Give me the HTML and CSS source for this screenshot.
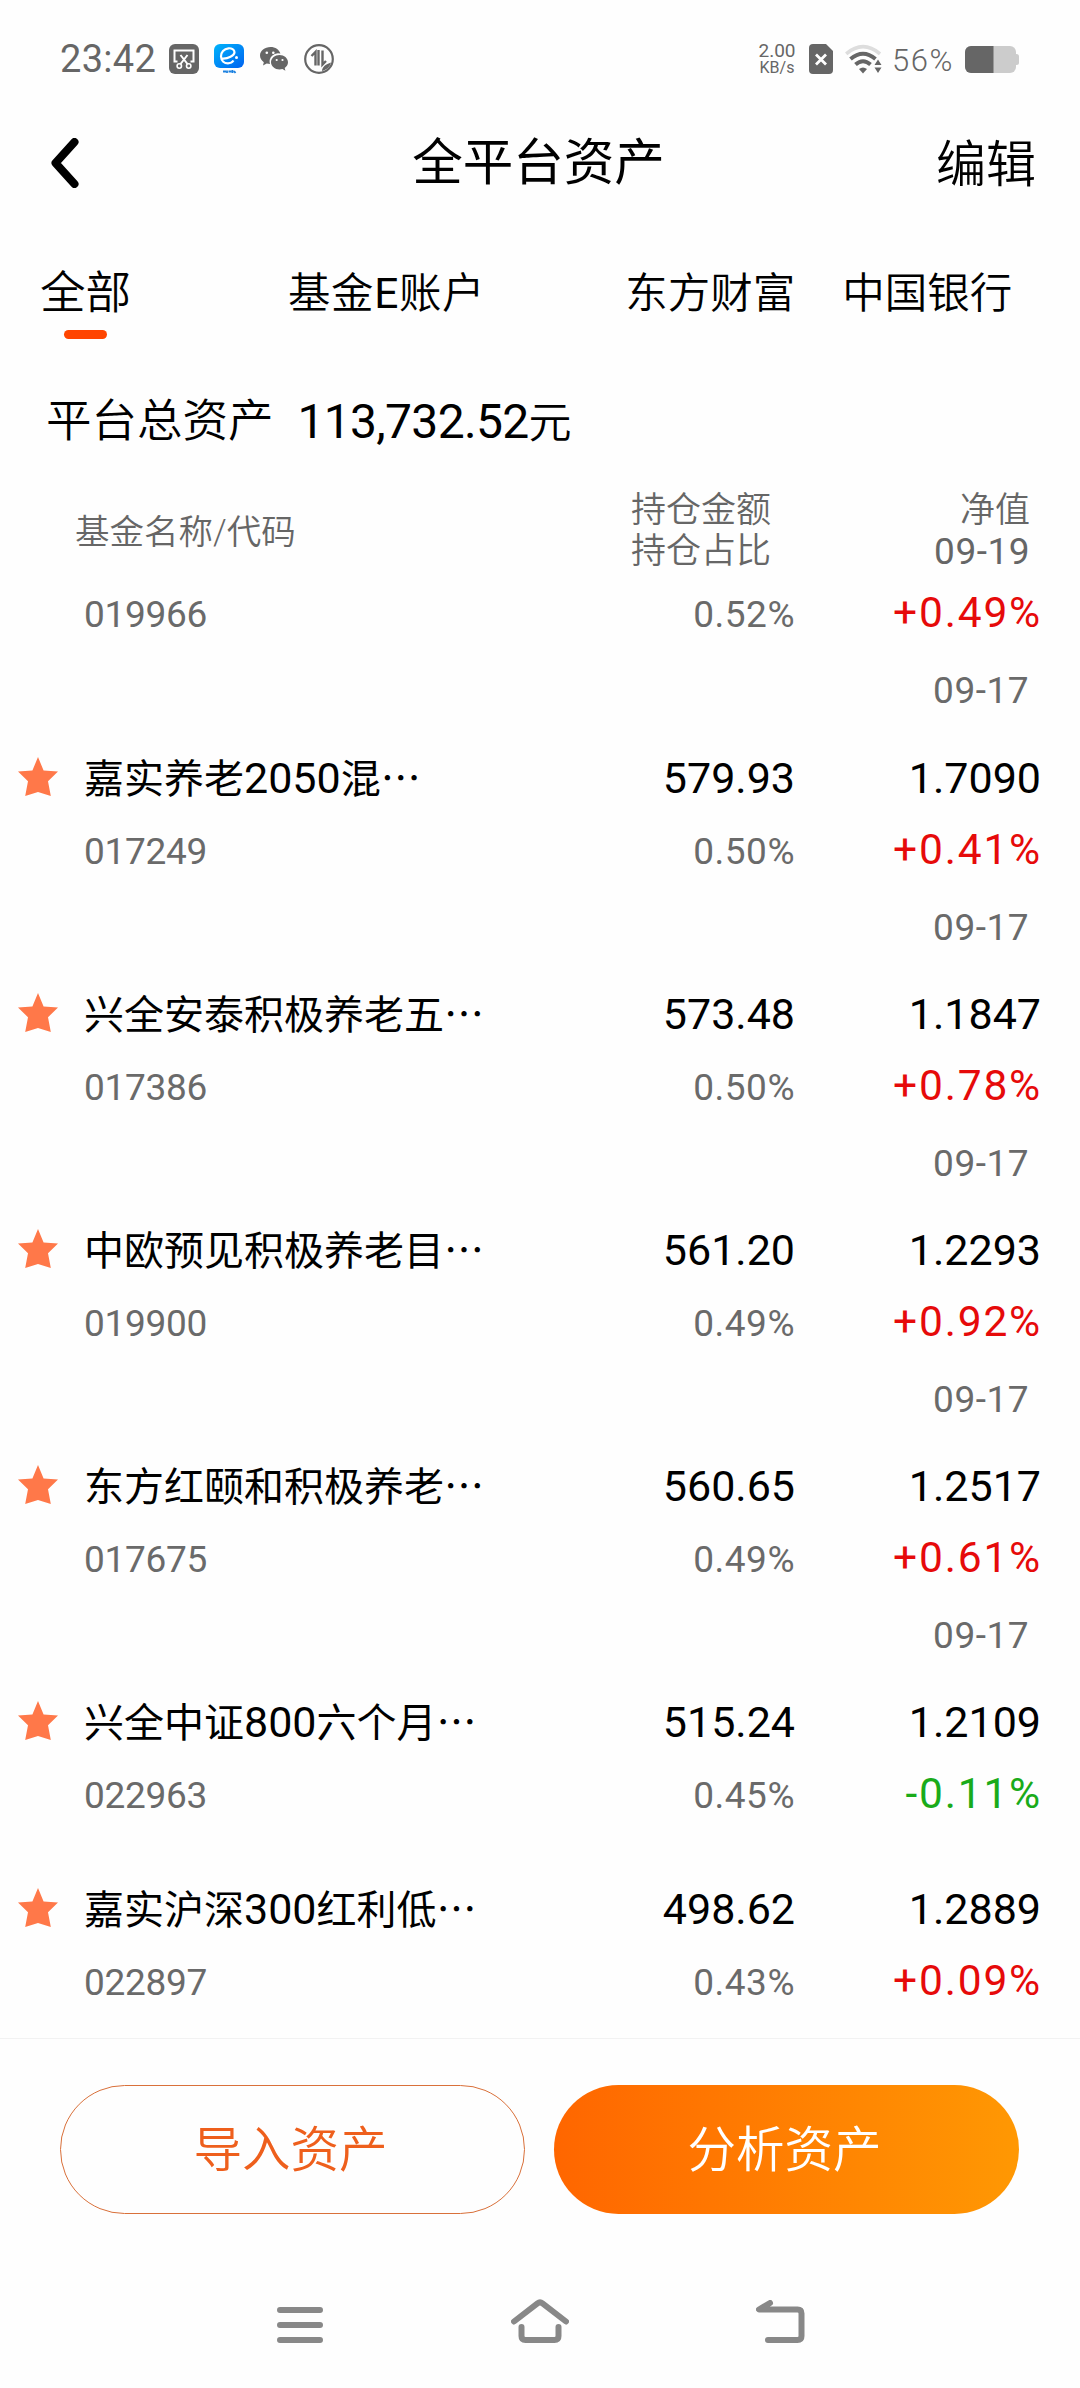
FILE: index.html
```
<!DOCTYPE html>
<html lang="zh-CN">
<head>
  <meta charset="UTF-8">
  <meta name="viewport" content="width=device-width, initial-scale=1.0">
  <title>全平台资产</title>
  <link rel="stylesheet" href="styles.css">
</head>
<body>
  <svg class="sprite" width="0" height="0">
    <symbol id="star" viewBox="0 0 40 40">
      <path d="M20 0l5.6 13.6L40 14.6 30 24.2 32.8 39 20 35 7.2 39 10 24.2 0 14.6l14.4-1z"/>
    </symbol>
  </svg>

  <div class="status-bar">
    <span class="time">23:42</span>
    <svg class="ic-shot" width="30" height="30" viewBox="0 0 30 30">
      <rect width="30" height="30" rx="6" fill="#666"/>
      <path d="M8.5 17.500H5.500V6.500H24.500V17.500H21.500M11.500 11l7 9M18.500 11l-7 9" fill="none" stroke="#fff" stroke-width="2"/>
      <circle cx="10.300" cy="22" r="2.200" fill="none" stroke="#fff" stroke-width="1.600"/>
      <circle cx="19.700" cy="22" r="2.200" fill="none" stroke="#fff" stroke-width="1.600"/>
    </svg>
    <svg class="ic-app" width="30" height="30" viewBox="0 0 30 30">
      <defs>
        <linearGradient id="blue" x1="0" y1="0" x2="1" y2="1">
          <stop offset="0" stop-color="#00b4fb"/>
          <stop offset="1" stop-color="#0062f0"/>
        </linearGradient>
      </defs>
      <rect width="30" height="24" rx="6" fill="url(#blue)"/>
      <path d="M8 14.500C14 15 20.500 11.500 20.500 8.300C20.500 5.500 17.500 4 14.500 4.300C10 4.800 6.800 8.300 7 12.500C7.200 17 10.500 19.300 14 19.300C16.500 19.300 18.500 18 19.500 16.500" fill="none" stroke="#fff" stroke-width="2.200"/>
      <circle cx="22.500" cy="13.500" r="1.500" fill="#fff"/>
      <path d="M9 27.500h3M13 26.500v2.500M14.500 27.500h3M18.500 26v3M20 27l1.500 2" stroke="#1a80e0" stroke-width="1.800"/>
    </svg>
    <svg class="ic-chat" width="28" height="25" viewBox="0 0 28 25">
      <path d="M10.500 0C4.700 0 0 3.800 0 8.600c0 2.700 1.500 5 3.800 6.600L3 18.500l3.700-1.900c1.200.3 2.300.5 3.300.5A8.500 8.500 0 0 1 20.400 6.500C19.300 2.700 15.300 0 10.500 0z" fill="#666"/>
      <path d="M28 15.300c0-4-3.900-7.200-8.500-7.200S11 11.300 11 15.300s3.900 7.200 8.500 7.200c1 0 2-.2 2.900-.4l3 1.700-.7-2.900c2-1.300 3.300-3.300 3.300-5.600z" fill="#666"/>
      <g fill="#fff">
        <circle cx="6.800" cy="5.800" r="1.300"/><circle cx="13.300" cy="5.800" r="1.300"/>
        <circle cx="16.700" cy="13" r="1.100"/><circle cx="22.500" cy="13" r="1.100"/>
      </g>
    </svg>
    <svg class="ic-data" width="30" height="30" viewBox="0 0 30 30">
      <circle cx="15" cy="15" r="13.800" fill="none" stroke="#666" stroke-width="2.200"/>
      <path d="M7.500 12l4-4V21.500M14.500 6v15.500M18.500 6.500v14l3.500-3.500" fill="none" stroke="#666" stroke-width="2.400"/>
      <path d="M18 27c0-4 4-7 9-8.500-1 4-4.500 7.500-9 8.500z" fill="#666"/>
    </svg>
    <div class="speed">
      <span>2.00</span>
      <small>KB/s</small>
    </div>
    <svg class="ic-sim" width="24" height="30" viewBox="0 0 24 30">
      <path d="M4 0h13l7 7v19a4 4 0 0 1-4 4H4a4 4 0 0 1-4-4V4a4 4 0 0 1 4-4z" fill="#666"/>
      <path d="M7 10.500l10 10M17 10.500l-10 10" stroke="#fff" stroke-width="2.800"/>
    </svg>
    <svg class="ic-wifi" width="37" height="30" viewBox="0 0 37 30">
      <g fill="none" stroke-width="4">
        <path d="M1.200 9.800Q18 -4.500 35 9.800" stroke="#ddd" stroke-width="3.600"/>
        <path d="M5.500 15Q18 4.500 30.500 15" stroke="#666"/>
        <path d="M10.500 20.500Q18 14 25.500 20.500" stroke="#666"/>
      </g>
      <path d="M14 25q4-3 8 0l-4 4.500z" fill="#666"/>
      <path d="M33 15.500l3.500 5.500h-7zM33 29l-3.500-5.500h7z" fill="#666"/>
    </svg>
    <span class="percent">56%</span>
    <svg class="ic-battery" width="54" height="27" viewBox="0 0 54 27">
      <rect width="51" height="27" rx="6" fill="#ccc"/>
      <rect x="49" y="8" width="5" height="11" rx="2.500" fill="#ccc"/>
      <path d="M6 0h22.500v27H6a6 6 0 0 1-6-6V6a6 6 0 0 1 6-6z" fill="#666"/>
    </svg>
  </div>

  <header class="nav-bar">
    <svg class="back" width="28" height="50" viewBox="0 0 28 50">
      <path d="M23.500 4L4.500 25l19 21" fill="none" stroke="#000" stroke-width="8" stroke-linecap="round" stroke-linejoin="round"/>
    </svg>
    <h1>全平台资产</h1>
    <a class="edit">编辑</a>
  </header>

  <nav class="tabs">
    <a class="tab active">全部</a>
    <a class="tab tab-fund">基金<b>E</b>账户</a>
    <a class="tab tab-east">东方财富</a>
    <a class="tab tab-boc">中国银行</a>
  </nav>

  <div class="total">
    <span>平台总资产</span>
    <span class="total-num">113,732.52<i>元</i></span>
  </div>

  <div class="table-head">
    <span class="th-name">基金名称/代码</span>
    <span class="th-amount">持仓金额<br>持仓占比</span>
    <span class="th-value">净值<br><b>09-19</b></span>
  </div>

  <main class="list">
    <div class="row partial">
      <span class="code">019966</span>
      <span class="ratio">0.52%</span>
      <span class="change up">+0.49%</span>
      <span class="date">09-17</span>
    </div>
    <div class="row">
      <svg class="star"><use href="#star"/></svg>
      <span class="name">嘉实养老<b>2050</b>混…</span>
      <span class="amount">579.93</span>
      <span class="value">1.7090</span>
      <span class="code">017249</span>
      <span class="ratio">0.50%</span>
      <span class="change up">+0.41%</span>
      <span class="date">09-17</span>
    </div>
    <div class="row">
      <svg class="star"><use href="#star"/></svg>
      <span class="name">兴全安泰积极养老五…</span>
      <span class="amount">573.48</span>
      <span class="value">1.1847</span>
      <span class="code">017386</span>
      <span class="ratio">0.50%</span>
      <span class="change up">+0.78%</span>
      <span class="date">09-17</span>
    </div>
    <div class="row">
      <svg class="star"><use href="#star"/></svg>
      <span class="name">中欧预见积极养老目…</span>
      <span class="amount">561.20</span>
      <span class="value">1.2293</span>
      <span class="code">019900</span>
      <span class="ratio">0.49%</span>
      <span class="change up">+0.92%</span>
      <span class="date">09-17</span>
    </div>
    <div class="row">
      <svg class="star"><use href="#star"/></svg>
      <span class="name">东方红颐和积极养老…</span>
      <span class="amount">560.65</span>
      <span class="value">1.2517</span>
      <span class="code">017675</span>
      <span class="ratio">0.49%</span>
      <span class="change up">+0.61%</span>
      <span class="date">09-17</span>
    </div>
    <div class="row short">
      <svg class="star"><use href="#star"/></svg>
      <span class="name">兴全中证<b>800</b>六个月…</span>
      <span class="amount">515.24</span>
      <span class="value">1.2109</span>
      <span class="code">022963</span>
      <span class="ratio">0.45%</span>
      <span class="change down">-0.11%</span>
    </div>
    <div class="row short">
      <svg class="star"><use href="#star"/></svg>
      <span class="name">嘉实沪深<b>300</b>红利低…</span>
      <span class="amount">498.62</span>
      <span class="value">1.2889</span>
      <span class="code">022897</span>
      <span class="ratio">0.43%</span>
      <span class="change up">+0.09%</span>
    </div>
  </main>

  <footer class="actions">
    <button class="btn btn-outline">导入资产</button>
    <button class="btn btn-fill">分析资产</button>
  </footer>

  <div class="sys-nav">
    <svg width="46" height="36" viewBox="0 0 46 36">
      <path d="M3 3h40M3 18h40M3 33h40"/>
    </svg>
    <svg width="58" height="44" viewBox="0 0 58 44">
      <path d="M3 22.500L26.500 4.300q2.500-1.900 5 0L55 22.500M10.500 28v9q0 4 4 4h29q4 0 4-4v-9"/>
    </svg>
    <svg width="49" height="43" viewBox="0 0 49 43">
      <path d="M14 3L3 9.500h38.500q4 0 4 4V36q0 4-4 4H12"/>
    </svg>
  </div>
</body>
</html>
```
FILE: styles.css
```
* {
  box-sizing: border-box;
}
body {
  width: 1080px;
  height: 2388px;
  margin: 0;
  overflow: hidden;
  display: flex;
  flex-direction: column;
  background-color: #fefefe;
  color: #000;
  font-family: Roboto, "Noto Sans CJK SC", sans-serif;
}
.sprite {
  position: absolute;
}

/* Status bar */
.status-bar {
  height: 118px;
  padding-left: 60px;
  display: flex;
  align-items: center;
  color: #666;
  flex: none;
}
.status-bar svg {
  flex: none;
}
.time {
  width: 109px;
  font-size: 38px;
  letter-spacing: 0.300px;
}
.ic-app {
  margin-left: 15px;
}
.ic-chat {
  margin-left: 16px;
}
.ic-data {
  margin-left: 16px;
}
.speed {
  margin-left: 424px;
  width: 38px;
  display: flex;
  flex-direction: column;
  align-items: center;
  font-size: 19px;
  line-height: 18px;
}
.speed small {
  font-size: 16px;
  line-height: 16px;
}
.ic-sim {
  margin-left: 13px;
}
.ic-wifi {
  margin-left: 12px;
}
.percent {
  margin-left: 10px;
  width: 73px;
  padding-top: 2px;
  font-size: 31px;
  font-weight: 300;
  letter-spacing: 1.500px;
}

/* Title bar */
.nav-bar {
  height: 92px;
  padding: 0 44px 0 51px;
  display: grid;
  grid-template-columns: 190px 1fr 200px;
  align-items: center;
  flex: none;
}
.back {
  margin-top: -4px;
}
h1 {
  margin: 0;
  padding-bottom: 5px;
  text-align: center;
  font-size: 50.500px;
  font-weight: 400;
  line-height: 87px;
}
.edit {
  text-align: right;
  font-size: 50px;
  line-height: 92px;
  font-weight: 350;
  padding-top: 1px;
}

/* Tabs */
.tabs {
  height: 150px;
  padding: 49px 0 0 40px;
  display: flex;
  font-size: 42.500px;
  font-weight: 350;
  line-height: 70px;
  flex: none;
}
.tab b {
  font-weight: 400;
}
.tab.active {
  font-size: 45.500px;
  display: flex;
  flex-direction: column;
  align-items: center;
}
.tab.active::after {
  content: "";
  width: 43px;
  height: 9px;
  margin-top: 1px;
  border-radius: 5px;
  background-color: #ff4500;
}
.tab-fund {
  margin-left: 157px;
  letter-spacing: 0.600px;
}
.tab-east {
  margin-left: 140px;
}
.tab-boc {
  margin-left: 47px;
}

.total {
  height: 114px;
  padding: 24px 0 0 46px;
  display: flex;
  gap: 24px;
  font-size: 45.500px;
  line-height: 76px;
  font-weight: 350;
  flex: none;
}
.total-num {
  font-size: 48px;
  font-weight: 400;
  letter-spacing: -0.700px;
}
.total-num i {
  font-style: normal;
  font-weight: 350;
  font-size: 43px;
}

/* Holdings table */
.table-head {
  height: 104px;
  padding: 16px 50px 0 75px;
  display: grid;
  grid-template-columns: 556px 1fr auto;
  color: #666;
  font-size: 35px;
  font-weight: 350;
  line-height: 41px;
  flex: none;
}
.th-name {
  padding-top: 22px;
  font-size: 34.500px;
}
.th-value {
  text-align: right;
  white-space: nowrap;
}
.th-value b {
  font-size: 37px;
  font-weight: 400;
  letter-spacing: 0.500px;
}
.list {
  height: 1460px;
  overflow: hidden;
  flex: none;
}
.row {
  height: 236px;
  padding: 0 39px 0 18px;
  display: grid;
  grid-template-columns: 66px 1fr 240px 246px;
  grid-template-rows: 74px 74px 76px;
  line-height: 74px;
}
.row.short {
  height: 187px;
}
.row.partial {
  height: 163px;
  grid-template-rows: 74px 76px;
}
.star {
  width: 40px;
  height: 40px;
  margin-top: 16px;
  fill: #ff7849;
}
.name {
  font-family: "Noto Sans CJK SC", sans-serif;
  font-size: 40px;
  line-height: 70px;
  white-space: nowrap;
}
.name b {
  font-family: Roboto, sans-serif;
  font-size: 43px;
  font-weight: 400;
}
.amount,
.value {
  text-align: right;
  font-size: 43px;
}
.code {
  grid-column: 2;
  color: #6a6a6a;
  font-size: 37px;
  letter-spacing: -0.300px;
}
.ratio {
  text-align: right;
  color: #6a6a6a;
  font-size: 37px;
  letter-spacing: 0.500px;
}
.change {
  text-align: right;
  font-size: 42.500px;
  line-height: 70px;
  letter-spacing: 1.800px;
  margin-right: -1px;
}
.up {
  color: #e60a0a;
}
.down {
  color: #1aab1a;
}
.date {
  grid-column: 4;
  padding-right: 12px;
  text-align: right;
  color: #6a6a6a;
  font-size: 37px;
  line-height: 78px;
  letter-spacing: 0.500px;
}

/* Bottom buttons */
.actions {
  height: 176px;
  padding: 46px 61px 0 60px;
  display: flex;
  gap: 29px;
  border-top: 1px solid #f2f2f2;
  flex: none;
}
.btn {
  width: 465px;
  height: 129px;
  padding: 0 4px 8px 0;
  border: 0;
  border-radius: 65px;
  font-family: inherit;
  font-size: 48.500px;
  font-weight: 350;
}
.btn-outline {
  border: 1.500px solid #d9703a;
  background-color: transparent;
  color: #ee5f1c;
}
.btn-fill {
  background: linear-gradient(90deg, #ff6600, #ff9803);
  color: #fff;
}

/* System navigation */
.sys-nav {
  padding: 0 275px 45px 277px;
  margin-top: auto;
  display: flex;
  justify-content: space-between;
  align-items: flex-end;
}
.sys-nav path {
  fill: none;
  stroke: #888;
  stroke-width: 6;
  stroke-linecap: round;
  stroke-linejoin: round;
}
```
